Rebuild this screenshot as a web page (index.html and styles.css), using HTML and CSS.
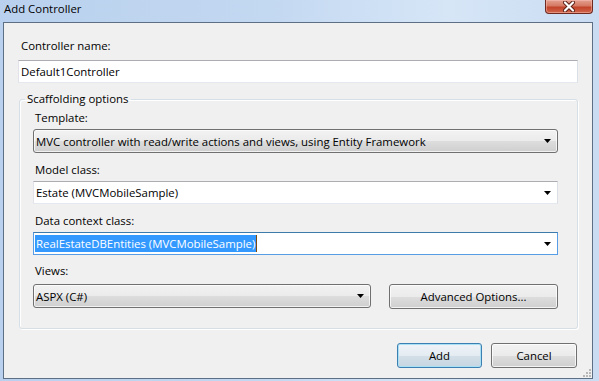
FILE: index.html
```html
<!DOCTYPE html>
<html>
<head lang="en">
    <meta charset="UTF-8">
    <title>Add Controller</title>
    <link rel="stylesheet" href="styles.css">
</head>
<body>
    <div class="window">
        <div class="titlebar">
            <span class="title">Add Controller</span>
            <div class="close">
                <svg width="14" height="11" viewBox="0 0 14 11">
                    <path d="M3 1.5 L11 9.5 M11 1.5 L3 9.5" stroke="#5a1f16" stroke-width="4" stroke-linecap="round"/>
                    <path d="M3 1.5 L11 9.5 M11 1.5 L3 9.5" stroke="#fff" stroke-width="2.2" stroke-linecap="round"/>
                </svg>
            </div>
        </div>

        <div class="client">
            <div class="label first">Controller name:</div>
            <div class="textbox">Default1Controller</div>

            <fieldset class="group">
                <legend>Scaffolding options</legend>

                <div class="label">Template:</div>
                <div class="combo combo-button tall">
                    <span>MVC controller with read/write actions and views, using Entity Framework</span>
                    <svg class="arrow" width="7" height="4" viewBox="0 0 7 4"><polygon points="0,0 7,0 3.5,4" fill="#000"/></svg>
                </div>

                <div class="label">Model class:</div>
                <div class="combo combo-edit">
                    <span>Estate (MVCMobileSample)</span>
                    <svg class="arrow" width="7" height="4" viewBox="0 0 7 4"><polygon points="0,0 7,0 3.5,4" fill="#000"/></svg>
                </div>

                <div class="label">Data context class:</div>
                <div class="combo combo-edit focused">
                    <span class="selection">RealEstateDBEntities (MVCMobileSample)</span><span class="caret"></span>
                    <svg class="arrow" width="7" height="4" viewBox="0 0 7 4"><polygon points="0,0 7,0 3.5,4" fill="#000"/></svg>
                </div>

                <div class="label views-label">Views:</div>
                <div class="views-row">
                    <div class="combo combo-button tall views">
                        <span>ASPX (C#)</span>
                        <svg class="arrow" width="7" height="4" viewBox="0 0 7 4"><polygon points="0,0 7,0 3.5,4" fill="#000"/></svg>
                    </div>
                    <div class="btn advanced">Advanced Options...</div>
                </div>
            </fieldset>

            <div class="actions">
                <div class="btn default">Add</div>
                <div class="btn">Cancel</div>
            </div>

            <div class="grip">
                <span></span><span></span><span></span>
                <span></span><span></span><span></span>
            </div>
        </div>
    </div>
</body>
</html>
```

FILE: styles.css
```css
body{
    margin: 0;
    width: 599px;
    height: 381px;
    overflow: hidden;
    font-family: "Open Sans", "Noto Sans", sans-serif;
    font-size: 11.4px;
    color: #000;
    background: linear-gradient(90deg, #b9d1ee 0%, #c3d8f1 45%, #d6e6f7 75%, #cadcf2 100%);
}

.window{
    height: 381px;
    display: flex;
    flex-direction: column;
}

.titlebar{
    height: 22px;
    flex: none;
    display: flex;
    justify-content: space-between;
    align-items: flex-start;
}

.title{
    padding: 1px 0 0 4px;
    font-size: 11.4px;
    line-height: 16px;
    color: #000;
}

.close{
    width: 46px;
    height: 13px;
    margin-right: 6px;
    border: 1px solid #6e2a20;
    border-top: none;
    border-radius: 0 0 4px 4px;
    background: linear-gradient(#e3a08f 0%, #d57a63 45%, #c2432a 55%, #d0674c 100%);
    box-shadow: inset 0 0 0 1px rgba(255,200,190,0.45);
    display: flex;
    justify-content: center;
    align-items: center;
}

.client{
    flex: 1;
    margin: 0 6px 2px 3px;
    border: 1px solid #5d6f84;
    background-color: #f0f0f0;
    padding: 15px 14px 0 14px;
    position: relative;
}

.label{
    height: 16px;
    line-height: 16px;
    margin: 9px 0 3px 2px;
}

.label.first{
    margin: 0 0 6px 3px;
}

.textbox{
    height: 21px;
    line-height: 21px;
    padding-left: 2px;
    background-color: #fff;
    border: 1px solid #e3e9ef;
    border-top-color: #abadb3;
    border-left-color: #e2e3ea;
    border-right-color: #dbdfe6;
}

.group{
    margin: 8px 0 0 1px;
    padding: 3px 19px 19px 13px;
    border: 1px solid #d5dfe5;
    border-radius: 3px;
    box-shadow: inset 1px 1px 0 #fff, 1px 1px 0 #fff;
}

.group legend{
    margin-left: -8px;
    padding: 0 3px 0 2px;
    height: 16px;
    line-height: 16px;
}

.group > .label:first-of-type{
    margin-top: 0;
}

.combo{
    display: flex;
    align-items: center;
    justify-content: space-between;
    padding: 0 6px 0 2px;
    height: 21px;
}

.combo .arrow{
    flex: none;
}

.combo-button{
    height: 22px;
    border: 1px solid #707070;
    border-radius: 3px;
    background: linear-gradient(#f2f2f2 0%, #ebebeb 50%, #dddddd 51%, #cfcfcf 100%);
    box-shadow: inset 0 0 0 1px rgba(255,255,255,0.7);
}

.combo-edit{
    background-color: #fff;
    border: 1px solid #e3e9ef;
    border-top-color: #abadb3;
    border-left-color: #e2e3ea;
    border-right-color: #dbdfe6;
}

.combo-edit.focused{
    border-color: #569de5;
    border-top-color: #3d7bad;
    padding-left: 1px;
}

.combo-edit.focused .arrow{
    margin-left: auto;
}

.selection{
    background-color: #3399ff;
    color: #fff;
    line-height: 17px;
    padding: 0 1px;
}

.caret{
    width: 1px;
    height: 17px;
    background-color: #7a4a10;
}

.views-label{
    margin-top: 8px;
    margin-bottom: 5px;
}

.views-row{
    display: flex;
    justify-content: space-between;
    align-items: flex-start;
}

.views{
    width: 328px;
}

.btn{
    height: 23px;
    line-height: 23px;
    text-align: center;
    border: 1px solid #707070;
    border-radius: 3px;
    background: linear-gradient(#f2f2f2 0%, #ebebeb 50%, #dddddd 51%, #cfcfcf 100%);
    box-shadow: inset 0 0 0 1px rgba(255,255,255,0.75);
}

.advanced{
    width: 167px;
}

.actions{
    display: flex;
    justify-content: flex-end;
    gap: 9px;
    margin: 14px 1px 0 0;
}

.actions .btn{
    width: 84px;
}

.actions .btn.default{
    width: 83px;
    border-color: #3c7fb1;
    background: linear-gradient(#eef3f7 0%, #e4ecf2 50%, #d3dfe8 51%, #c7d6e2 100%);
    box-shadow: inset 0 0 0 1px #a9e0f5;
}

.grip{
    position: absolute;
    right: 1px;
    bottom: 1px;
    width: 9px;
    height: 9px;
}

.grip span{
    position: absolute;
    width: 2px;
    height: 2px;
    background-color: #b8b8b8;
}

.grip span:nth-child(1){ right: 0; bottom: 0; }
.grip span:nth-child(2){ right: 3px; bottom: 0; }
.grip span:nth-child(3){ right: 6px; bottom: 0; }
.grip span:nth-child(4){ right: 0; bottom: 3px; }
.grip span:nth-child(5){ right: 3px; bottom: 3px; }
.grip span:nth-child(6){ right: 0; bottom: 6px; }
```
